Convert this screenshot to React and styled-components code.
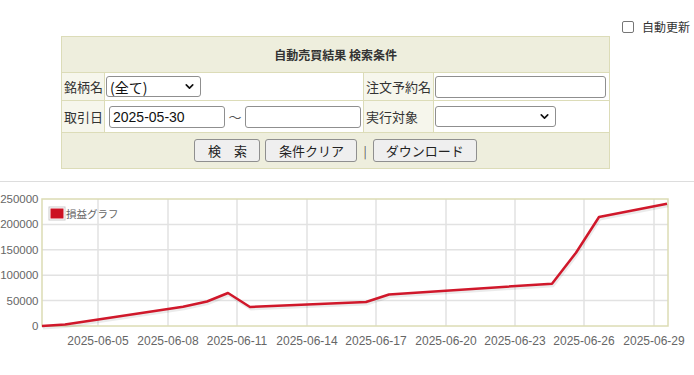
import React from "react";
import styled, { createGlobalStyle } from "styled-components";
import { ChevronDown } from "lucide-react";

const GlobalStyle = createGlobalStyle`
  body {
    margin: 0;
    background: #fff;
    font-family: "Noto Sans CJK JP", "Liberation Sans", sans-serif;
    color: #333;
  }
`;

const points = [
  [42, 326], [65, 324.5], [183, 306.7], [207, 301.5], [228, 293], [250, 307],
  [366, 302], [389, 294.5], [552, 283.7], [576, 252.7], [599, 217], [667, 203.7],
];
const hLines = [224.4, 249.8, 275.2, 300.6];
const yLabels = [
  ["250000", 199], ["200000", 224.4], ["150000", 249.8],
  ["100000", 275.2], ["50000", 300.6], ["0", 326],
];
const xTicks = [
  [98, "2025-06-05"], [168, "2025-06-08"], [237, "2025-06-11"],
  [307, "2025-06-14"], [376, "2025-06-17"], [446, "2025-06-20"],
  [515, "2025-06-23"], [584, "2025-06-26"], [654, "2025-06-29"],
];
const TOP = 183;

export default function App() {
  const line = points.map(([x, y]) => `${x},${y - TOP}`).join(" ");
  const shadow = points.map(([x, y]) => `${x + 1},${y - TOP + 2}`).join(" ");
  return (
    <>
      <GlobalStyle />
      <TopBar>
        <CheckLabel>
          <Box type="checkbox" />
          自動更新
        </CheckLabel>
      </TopBar>
      <SearchTable>
        <colgroup>
          <col style={{ width: 43 }} />
          <col style={{ width: 259 }} />
          <col style={{ width: 70 }} />
          <col style={{ width: 176 }} />
        </colgroup>
        <tbody>
          <tr>
            <Head colSpan={4}>自動売買結果 検索条件</Head>
          </tr>
          <Row h={28}>
            <Label>銘柄名</Label>
            <Value>
              <SelectWrap w={95}>
                <Select defaultValue="all">
                  <option value="all">(全て)</option>
                </Select>
                <Chevron size={13} strokeWidth={3} />
              </SelectWrap>
            </Value>
            <Label>注文予約名</Label>
            <Value>
              <Input w={171} />
            </Value>
          </Row>
          <Row h={32}>
            <Label>取引日</Label>
            <Value>
              <DateRange>
                <Input w={116} defaultValue="2025-05-30" />
                <Tilde>～</Tilde>
                <Input w={116} />
              </DateRange>
            </Value>
            <Label>実行対象</Label>
            <Value>
              <SelectWrap w={121}>
                <Select defaultValue="">
                  <option value=""></option>
                </Select>
                <Chevron size={13} strokeWidth={3} />
              </SelectWrap>
            </Value>
          </Row>
          <tr>
            <Actions colSpan={4}>
              <ButtonRow>
                <Button w={66}>検　索</Button>
                <Button w={92}>条件クリア</Button>
                <Bar>|</Bar>
                <Button w={104}>ダウンロード</Button>
              </ButtonRow>
            </Actions>
          </tr>
        </tbody>
      </SearchTable>
      <Divider />
      <Chart width="694" height="192">
        <rect x="42" y={199 - TOP} width="626" height="127" fill="#fff" />
        {hLines.map((y) => (
          <line key={y} x1="42" x2="668" y1={y - TOP} y2={y - TOP} stroke="#e2e2e2" strokeWidth="1.5" />
        ))}
        {xTicks.map(([x]) => (
          <line key={x} x1={x} x2={x} y1={199 - TOP} y2={326 - TOP} stroke="#e2e2e2" strokeWidth="1.5" />
        ))}
        <rect x="42" y={199 - TOP} width="626" height="127" fill="none" stroke="#dcdcb4" strokeWidth="1.5" />
        <polyline points={shadow} fill="none" stroke="#000" strokeOpacity="0.08" strokeWidth="3" />
        <polyline points={line} fill="none" stroke="#d0182b" strokeWidth="2.5" strokeLinejoin="round" />
        {yLabels.map(([t, y]) => (
          <AxisText key={t} x="38.5" y={y - TOP + 4} textAnchor="end" size={11.5}>{t}</AxisText>
        ))}
        {xTicks.map(([x, t]) => (
          <AxisText key={t} x={x} y={345 - TOP} textAnchor="middle">{t}</AxisText>
        ))}
        <rect x="49" y={207 - TOP} width="16" height="13" fill="#fff" stroke="#ccc" strokeWidth="1" />
        <rect x="50.5" y={208.5 - TOP} width="13" height="10" fill="#cc1122" />
        <AxisText x="66" y={218 - TOP} size={10.5}>損益グラフ</AxisText>
      </Chart>
    </>
  );
}

const TopBar = styled.div`
  display: flex;
  justify-content: flex-end;
  padding: 17px 4px 0 0;
  height: 19px;
`;

const CheckLabel = styled.label`
  display: flex;
  align-items: center;
  gap: 8px;
  font-size: 12px;
  color: #333;
`;

const Box = styled.input`
  appearance: none;
  margin: 0;
  width: 12px;
  height: 12px;
  border: 1px solid #767676;
  border-radius: 2px;
  background: #fff;
`;

const SearchTable = styled.table`
  margin-left: 61px;
  width: 548px;
  table-layout: fixed;
  border-collapse: collapse;
  border: 1px solid #dcdcb8;
  font-size: 13px;
  color: #333;
`;

const Head = styled.th`
  height: 35px;
  background: #eeeedd;
  border: 1px solid #dcdcb8;
  font-size: 12px;
  font-weight: bold;
  text-align: center;
  padding: 0;
`;

const Row = styled.tr`
  height: ${(p) => p.h}px;
`;

const Label = styled.td`
  background: #f6f6ec;
  border: 1px solid #dcdcb8;
  padding: 0 2px;
  white-space: nowrap;
  overflow: hidden;
  font-size: 13px;
`;

const Value = styled.td`
  background: #fff;
  border: 1px solid #dcdcb8;
  padding: 0 2px 0 1px;
`;

const DateRange = styled.div`
  display: flex;
  align-items: center;
  padding-left: 3px;
`;

const Tilde = styled.span`
  width: 21px;
  text-align: center;
  color: #555;
  font-size: 13px;
`;

const Input = styled.input`
  box-sizing: border-box;
  display: block;
  width: ${(p) => p.w}px;
  height: 22px;
  margin: 0;
  border: 1px solid #8f8f8f;
  border-radius: 3px;
  padding: 0 3px;
  font-family: "Liberation Sans", "Noto Sans CJK JP", sans-serif;
  font-size: 14px;
  color: #111;
`;

const SelectWrap = styled.div`
  position: relative;
  width: ${(p) => p.w}px;
  height: 21px;
`;

const Select = styled.select`
  appearance: none;
  box-sizing: border-box;
  width: 100%;
  height: 100%;
  margin: 0;
  border: 1px solid #8f8f8f;
  border-radius: 3px;
  padding: 0 3px;
  background: #fff;
  font-family: "Noto Sans CJK JP", sans-serif;
  font-size: 14px;
  color: #111;
`;

const Chevron = styled(ChevronDown)`
  position: absolute;
  right: 5px;
  top: 4px;
  color: #111;
  pointer-events: none;
`;

const Actions = styled.td`
  height: 35px;
  background: #eeeedd;
  border: 1px solid #dcdcb8;
  padding: 0;
`;

const ButtonRow = styled.div`
  display: flex;
  justify-content: center;
  align-items: center;
  gap: 5px;
`;

const Button = styled.button`
  box-sizing: border-box;
  width: ${(p) => p.w}px;
  height: 23px;
  padding: 0;
  border: 1px solid #8f8f8f;
  border-radius: 3px;
  background: #efefef;
  font-family: "Noto Sans CJK JP", sans-serif;
  font-size: 13px;
  color: #222;
`;

const Bar = styled.span`
  font-size: 12px;
  color: #555;
  padding: 0 1px;
`;

const Divider = styled.div`
  margin-top: 12px;
  border-top: 1px solid #ddd;
`;

const Chart = styled.svg`
  display: block;
  margin-top: 1px;
`;

const AxisText = styled.text`
  font-family: "Liberation Sans", "Noto Sans CJK JP", sans-serif;
  font-size: ${(p) => p.size || 12}px;
  fill: #666;
`;
